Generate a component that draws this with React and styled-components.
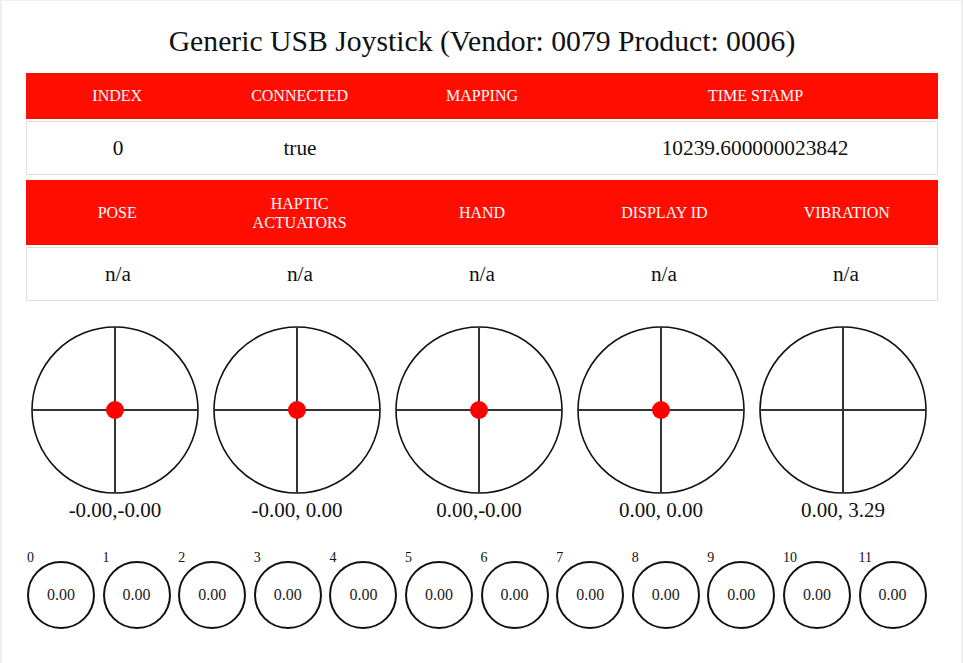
import React from 'react'
import styled, { createGlobalStyle } from 'styled-components'

const serif = `"Liberation Serif", "Times New Roman", Times, serif`

const GlobalStyle = createGlobalStyle`
  html, body {
    margin: 0;
    padding: 0;
    background: #efefef;
  }
  body {
    font-family: ${serif};
    color: #111;
  }
`

const info = [
  { label: 'Index', value: '0' },
  { label: 'Connected', value: 'true' },
  { label: 'Mapping', value: '' },
  { label: 'Time Stamp', value: '10239.600000023842', span: 2 },
]

const extra = [
  { label: 'Pose', value: 'n/a' },
  { label: 'Haptic Actuators', value: 'n/a' },
  { label: 'Hand', value: 'n/a' },
  { label: 'Display ID', value: 'n/a' },
  { label: 'Vibration', value: 'n/a' },
]

const axes = [
  { dot: true, text: '-0.00,-0.00' },
  { dot: true, text: '-0.00, 0.00' },
  { dot: true, text: '0.00,-0.00' },
  { dot: true, text: '0.00, 0.00' },
  { dot: false, text: '0.00, 3.29' },
]

const buttons = Array.from({ length: 12 }, (_, i) => ({ id: i, value: '0.00' }))

const InfoTable = ({ rows, tall }) => (
  <Table>
    <HeadRow $tall={tall}>
      {rows.map((r) => (
        <HeadCell key={r.label} $span={r.span}>{r.label}</HeadCell>
      ))}
    </HeadRow>
    <BodyRow>
      {rows.map((r) => (
        <BodyCell key={r.label} $span={r.span}>{r.value}</BodyCell>
      ))}
    </BodyRow>
  </Table>
)

const Stick = ({ axis }) => (
  <StickBox>
    <svg width="168" height="168" viewBox="0 0 168 168">
      <circle cx="84" cy="84" r="83" fill="none" stroke="#111" strokeWidth="1.6" />
      <line x1="1" y1="84" x2="167" y2="84" stroke="#333" strokeWidth="2" />
      <line x1="84" y1="1" x2="84" y2="167" stroke="#333" strokeWidth="2" />
      {axis.dot && <circle cx="84" cy="84" r="9" fill="#ff0000" />}
    </svg>
    <StickLabel>{axis.text}</StickLabel>
  </StickBox>
)

const App = () => {
  return (
    <>
      <GlobalStyle />
      <Panel>
        <Title>Generic USB Joystick (Vendor: 0079 Product: 0006)</Title>
        <InfoTable rows={info} />
        <InfoTable rows={extra} tall />
        <Sticks>
          {axes.map((a, i) => (
            <Stick key={i} axis={a} />
          ))}
        </Sticks>
        <Buttons>
          {buttons.map((b) => (
            <Button key={b.id}>
              <ButtonIndex>{b.id}</ButtonIndex>
              {b.value}
            </Button>
          ))}
        </Buttons>
      </Panel>
    </>
  )
}

const Panel = styled.div`
  box-sizing: border-box;
  margin: 1px 2px 0 2px;
  min-height: calc(100vh - 1px);
  background: #fff;
  padding: 23px 23px 30px 24px;
  font-family: ${serif};
`

const Title = styled.h1`
  margin: 0 0 15px 0;
  font-family: ${serif};
  font-size: 29.7px;
  line-height: 34px;
  font-weight: 400;
  text-align: center;
  color: #111;
`

const Table = styled.div`
  display: grid;
  grid-template-columns: repeat(5, 1fr);
  row-gap: 2px;
  margin-bottom: 5px;
`

const HeadRow = styled.div`
  display: contents;
  & > div {
    padding: ${(p) => (p.$tall ? '13px 16px' : '13px 16px 14px')};
    min-height: ${(p) => (p.$tall ? '39px' : '19px')};
  }
`

const HeadCell = styled.div`
  grid-column: span ${(p) => p.$span || 1};
  background: #ff0d00;
  color: #fff;
  font-family: ${serif};
  font-size: 16px;
  line-height: 19px;
  text-transform: uppercase;
  text-align: center;
  display: flex;
  align-items: center;
  justify-content: center;
`

const BodyRow = styled.div`
  grid-column: 1 / -1;
  display: grid;
  grid-template-columns: repeat(5, 1fr);
  border: 1px solid #dedede;
  height: 52px;
`

const BodyCell = styled.div`
  grid-column: span ${(p) => p.$span || 1};
  display: flex;
  align-items: center;
  justify-content: center;
  font-family: ${serif};
  font-size: 21.33px;
  color: #111;
`

const Sticks = styled.div`
  display: flex;
  gap: 14px;
  padding: 20px 0 0 5px;
`

const StickBox = styled.div`
  display: flex;
  flex-direction: column;
  align-items: center;
`

const StickLabel = styled.div`
  font-family: ${serif};
  font-size: 21px;
  line-height: 24px;
  margin-top: 4px;
  color: #111;
`

const Buttons = styled.div`
  display: flex;
  gap: 7.6px;
  padding: 39px 0 0 1px;
`

const Button = styled.div`
  position: relative;
  box-sizing: border-box;
  width: 68px;
  height: 68px;
  border: 2px solid #111;
  border-radius: 50%;
  display: flex;
  align-items: center;
  justify-content: center;
  font-family: ${serif};
  font-size: 16px;
  color: #222;
`

const ButtonIndex = styled.span`
  position: absolute;
  left: -2px;
  top: -13px;
  font-size: 14px;
  line-height: 16px;
  color: #111;
`

export default App
